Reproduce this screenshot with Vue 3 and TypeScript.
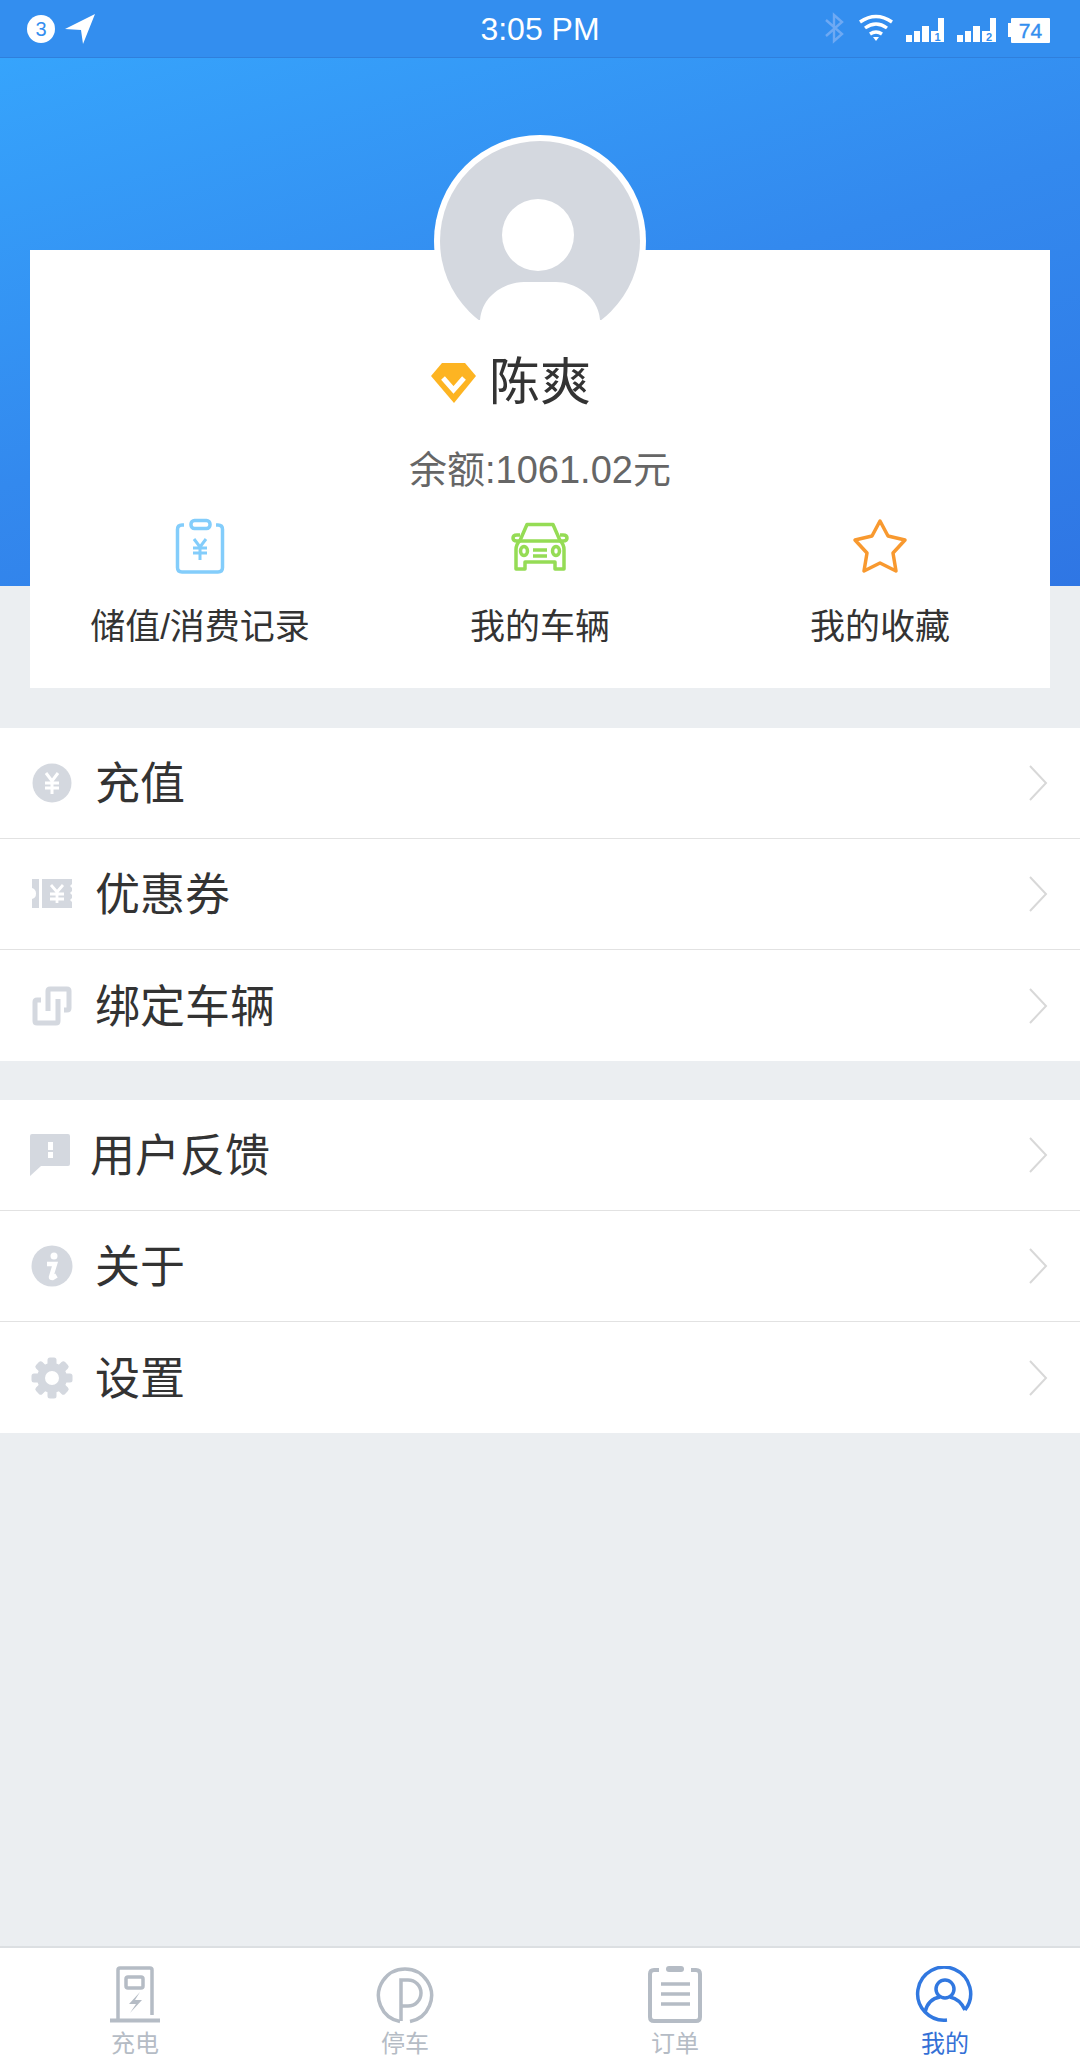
<script setup lang="ts">
type MenuItem = { icon: string; label: string; tight?: boolean };

const shortcuts = [
  { icon: 'record', label: '储值/消费记录' },
  { icon: 'car', label: '我的车辆' },
  { icon: 'star', label: '我的收藏' },
];

const menuGroups: MenuItem[][] = [
  [
    { icon: 'yuan', label: '充值' },
    { icon: 'coupon', label: '优惠券' },
    { icon: 'link', label: '绑定车辆' },
  ],
  [
    { icon: 'feedback', label: '用户反馈', tight: true },
    { icon: 'info', label: '关于' },
    { icon: 'gear', label: '设置' },
  ],
];

const tabs = [
  { icon: 'charge', label: '充电' },
  { icon: 'parking', label: '停车' },
  { icon: 'orders', label: '订单' },
  { icon: 'me', label: '我的', active: true },
];

const gearTeeth = [0, 45, 90, 135, 180, 225, 270, 315];
</script>

<template>
  <div class="page">
    <div class="status-bar">
      <div class="status-left">
        <span class="notify">3</span>
        <svg class="locate" width="32" height="32" viewBox="0 0 32 32">
          <path d="M1 16 31 1 19 31 17 17Z" fill="#fff" />
        </svg>
      </div>
      <span class="clock">3:05 PM</span>
      <svg class="status-right" width="232" height="34" viewBox="0 0 232 34">
        <path d="M2 9 18 23 10 30V4l8 7L2 25" fill="none" stroke="#6ea9f3" stroke-width="2.4" />
        <g fill="none" stroke="#fff" stroke-width="3.4">
          <path d="M36 11q16-11 32 0" />
          <path d="M41 17q11-8 22 0" />
          <path d="M46 23q6-4 12 0" />
        </g>
        <path d="M49 26h6l-3 4Z" fill="#fff" />
        <g fill="#fff">
          <rect x="82" y="24" width="6" height="7" />
          <rect x="90" y="20" width="6" height="11" />
          <rect x="98" y="15" width="7" height="16" />
          <rect x="107" y="20" width="13" height="11" />
          <rect x="114" y="7" width="6" height="14" />
          <rect x="133" y="24" width="6" height="7" />
          <rect x="141" y="20" width="6" height="11" />
          <rect x="149" y="15" width="7" height="16" />
          <rect x="158" y="20" width="14" height="11" />
          <rect x="166" y="7" width="6" height="14" />
          <rect x="184" y="12" width="4" height="14" />
          <rect x="187" y="7" width="39" height="25" rx="1" />
        </g>
        <g class="status-digit">
          <text x="113.5" y="30" font-size="11">1</text>
          <text x="165" y="30" font-size="11">2</text>
          <text x="206.5" y="26.5" font-size="21" class="battery-digit">74</text>
        </g>
      </svg>
    </div>

    <div class="hero"></div>

    <section class="card">
      <svg class="avatar" width="212" height="185" viewBox="0 0 212 185">
        <circle cx="106" cy="106" r="106" fill="#fff" />
        <circle cx="106" cy="106" r="100" fill="#d4d8df" />
        <circle cx="104" cy="100" r="36" fill="#fff" />
        <path d="M46 185C48 160 72 147 90 147h32c18 0 42 13 44 38Z" fill="#fff" />
      </svg>
      <div class="name-row">
        <svg width="45" height="40" viewBox="0 0 45 40">
          <path d="M11 0h23l11 13-22 27L0 13Z" fill="#fdb422" />
          <path d="M12 15 22.500 27 33 15" fill="none" stroke="#fff" stroke-width="5" />
        </svg>
        <span class="name">陈爽</span>
      </div>
      <p class="balance">余额:1061.02元</p>
      <div class="shortcuts">
        <div v-for="item in shortcuts" :key="item.label" class="shortcut">
          <svg class="shortcut-icon" width="60" height="60" viewBox="0 0 60 60">
            <g v-if="item.icon === 'record'" fill="none" stroke="#83cdfb" stroke-width="3.500">
              <path d="M14 8h-2q-4.500 0-4.500 4.500v38q0 4.500 4.500 4.500h36q4.500 0 4.500-4.500v-38q0-4.500-4.500-4.500h-2" />
              <rect x="21" y="3.500" width="19" height="8" rx="3.500" />
              <path d="M24 22l6 8 6-8M23 31h14M23 36h14M30 30v13" stroke-width="3" />
            </g>
            <g v-else-if="item.icon === 'car'" fill="none" stroke="#95dc55" stroke-width="3.500" stroke-linejoin="round">
              <path d="M17 7.500h26l7 16q4 4 4 9V52h-9v-7H15v7H6V32.500q0-5 4-9Z" />
              <path d="M10 24h40M10 24H7q-4 0-4-3t4-3h3M50 24h3q4 0 4-3t-4-3h-3" />
              <ellipse cx="14" cy="34" rx="3.500" ry="4.500" />
              <ellipse cx="46" cy="34" rx="3.500" ry="4.500" />
              <path d="M23 33h14M23 39h14" />
            </g>
            <path
              v-else
              d="M30 4 38 19 55 23 43 36 46 54 30 46 14 54 17 36 5 23 22 19Z"
              fill="none"
              stroke="#f8992f"
              stroke-width="3.500"
              stroke-linejoin="round"
            />
          </svg>
          <span class="shortcut-label">{{ item.label }}</span>
        </div>
      </div>
    </section>

    <section v-for="(group, index) in menuGroups" :key="index" class="menu-group">
      <div v-for="item in group" :key="item.label" class="menu-row">
        <svg class="menu-icon" width="44" height="44" viewBox="0 0 44 44">
          <g v-if="item.icon === 'yuan'">
            <circle cx="22" cy="22" r="19.500" fill="#d4d8df" />
            <path d="M16 12l6 8 6-8M15 22h14M15 27h14M22 20v13" fill="none" stroke="#fff" stroke-width="3" />
          </g>
          <g v-else-if="item.icon === 'coupon'">
            <path d="M2 7h7v29H2v-9q4-1 4-5.500T2 16ZM12 7h30v5l-2 2 2 2v3l-2 2 2 2v3l-2 2 2 2v6H12Z" fill="#d4d8df" />
            <path d="M21 13l6 7 6-7M20 22h14M20 27h14M27 20v11" fill="none" stroke="#fff" stroke-width="2.800" />
          </g>
          <g v-else-if="item.icon === 'link'" fill="none" stroke="#d4d8df" stroke-width="5">
            <path d="M18 27V7q0-2 2-2h17q2 0 2 2v17q0 2-2 2h-3" />
            <path d="M11 16H7q-2 0-2 2v19q0 2 2 2h19q2 0 2-2V15" />
          </g>
          <g v-else-if="item.icon === 'feedback'">
            <path d="M0 3q0-2 2-2h36q2 0 2 2v28q0 2-2 2H11L0 43Z" fill="#d4d8df" />
            <rect x="18" y="9" width="5" height="8" fill="#fff" />
            <rect x="18" y="19" width="5" height="6" fill="#fff" />
          </g>
          <g v-else-if="item.icon === 'info'">
            <circle cx="22" cy="22" r="20.500" fill="#d4d8df" />
            <circle cx="24" cy="12" r="3.500" fill="#fff" />
            <path d="M17 20h8l-4 13q0 1 1.500 1l4-2.500" fill="none" stroke="#fff" stroke-width="4.500" />
          </g>
          <g v-else fill="#d4d8df">
            <rect
              v-for="angle in gearTeeth"
              :key="angle"
              x="17.500"
              y="1.500"
              width="9"
              height="11"
              rx="2.500"
              :transform="`rotate(${angle} 22 22)`"
            />
            <circle cx="22" cy="22" r="15" />
            <circle cx="22" cy="22" r="7" fill="#fff" />
          </g>
        </svg>
        <span class="menu-label" :class="{ tight: item.tight }">{{ item.label }}</span>
        <svg class="chevron" width="20" height="36" viewBox="0 0 20 36">
          <path d="M2 1l16 17L2 35" fill="none" stroke="#d8d8d8" stroke-width="2" />
        </svg>
      </div>
    </section>

    <nav class="tab-bar">
      <div v-for="tab in tabs" :key="tab.label" class="tab" :class="{ active: tab.active }">
        <svg class="tab-icon" width="60" height="60" viewBox="0 0 60 60">
          <g v-if="tab.icon === 'charge'" fill="none" stroke="#b5bcc5" stroke-width="3.500">
            <path d="M13 53V4q0-2 2-2h30q2 0 2 2v45" />
            <path d="M5 54.500h50" stroke-width="4" />
            <rect x="21" y="11" width="17" height="11" rx="2" />
            <path d="M35 29 24 41h7l-6 9 12-13h-7Z" transform="translate(0 -3)" fill="#b5bcc5" stroke="none" />
          </g>
          <g v-else-if="tab.icon === 'parking'" fill="none" stroke="#b5bcc5" stroke-width="3.500">
            <path d="M25 55.500A26.500 26.500 0 1 1 35 55.500" />
            <path d="M26 55V14h7a13 13 0 0 1 0 26h-7" />
          </g>
          <g v-else-if="tab.icon === 'orders'" fill="none" stroke="#b5bcc5" stroke-width="3.500">
            <path d="M14 4H9q-4 0-4 4v43q0 4 4 4h42q4 0 4-4V8q0-4-4-4h-5" stroke-width="4" />
            <rect x="21" y="0" width="18" height="6" rx="3" fill="#b5bcc5" stroke="none" />
            <path d="M16 18h29M16 28h29M16 38h29" />
          </g>
          <g v-else fill="none" stroke="#3178e0" stroke-width="3.500">
            <path d="M32 54A26.500 26.500 0 1 1 50 44" />
            <circle cx="30" cy="23" r="9" />
            <path d="M10 46q3-13 15-15M35 31q10 2 15 13" />
          </g>
        </svg>
        <span class="tab-label">{{ tab.label }}</span>
      </div>
    </nav>
  </div>
</template>

<style>
html,
body {
  margin: 0;
  background: #ebeef1;
}
</style>

<style scoped>
.page {
  width: 1080px;
  height: 2060px;
  display: flex;
  flex-direction: column;
  background: #ebeef1;
  overflow: hidden;
  font-family: "Liberation Sans", "Noto Sans CJK SC", sans-serif;
  color: #333;
}

.status-bar {
  height: 58px;
  flex: none;
  box-sizing: border-box;
  padding: 0 24px;
  display: grid;
  grid-template-columns: 1fr auto 1fr;
  align-items: center;
  background: #338eef;
  border-bottom: 1px solid #2f7fdc;
  color: #fff;
}

.status-left {
  display: flex;
  align-items: center;
  gap: 9px;
  margin-left: 3px;
}

.notify {
  width: 28px;
  height: 28px;
  border-radius: 50%;
  background: #fff;
  color: #338eef;
  font-size: 20px;
  line-height: 28px;
  text-align: center;
}

.clock {
  font-size: 32px;
  line-height: 58px;
}

.status-right {
  justify-self: end;
  margin-top: -2px;
}

.status-digit text {
  fill: #338eef;
  text-anchor: middle;
  font-weight: 700;
}

.status-digit .battery-digit {
  font-weight: 400;
  stroke: #338eef;
  stroke-width: 0.4px;
}

.hero {
  height: 528px;
  flex: none;
  background: linear-gradient(163deg, #36a4fc 0%, #3389ee 50%, #2f76e4 100%);
}

.card {
  flex: none;
  height: 438px;
  margin: -336px 30px 0;
  position: relative;
  background: #fff;
  display: flex;
  flex-direction: column;
  align-items: center;
}

.avatar {
  flex: none;
  margin-top: -115px;
}

.name-row {
  margin: 32px 58px 0 0;
  height: 62px;
  display: flex;
  align-items: center;
  gap: 13px;
}

.name {
  font-size: 51px;
  line-height: 62px;
}

.balance {
  margin: 32px 0 0;
  font-size: 38px;
  line-height: 48px;
  color: #666;
}

.shortcuts {
  margin-top: 23px;
  align-self: stretch;
  display: grid;
  grid-template-columns: repeat(3, 1fr);
}

.shortcut {
  display: flex;
  flex-direction: column;
  align-items: center;
}

.shortcut-icon {
  display: block;
}

.shortcut-label {
  margin-top: 27px;
  font-size: 35px;
  line-height: 46px;
}

.menu-group {
  flex: none;
  margin-top: 39px;
  background: #fff;
}

.card + .menu-group {
  margin-top: 40px;
}

.menu-row {
  height: 111px;
  box-sizing: border-box;
  padding: 0 32px 0 30px;
  display: flex;
  align-items: center;
  border-bottom: 1px solid #e2e2e2;
}

.menu-row:last-child {
  border-bottom: 0;
}

.menu-icon {
  flex: none;
}

.menu-label {
  flex: 1;
  margin: 4px 0 0 21px;
  font-size: 45px;
  line-height: 60px;
}

.menu-label.tight {
  margin-left: 16px;
}

.tab-bar {
  margin-top: auto;
  height: 114px;
  flex: none;
  box-sizing: border-box;
  border-top: 2px solid #dcdfe2;
  background: #fff;
  display: grid;
  grid-template-columns: repeat(4, 1fr);
}

.tab {
  display: flex;
  flex-direction: column;
  align-items: center;
  padding-top: 18px;
  color: #b5bcc5;
}

.tab.active {
  color: #3470d6;
}

.tab-label {
  font-size: 24px;
  line-height: 30px;
  margin-top: 3px;
}
</style>
